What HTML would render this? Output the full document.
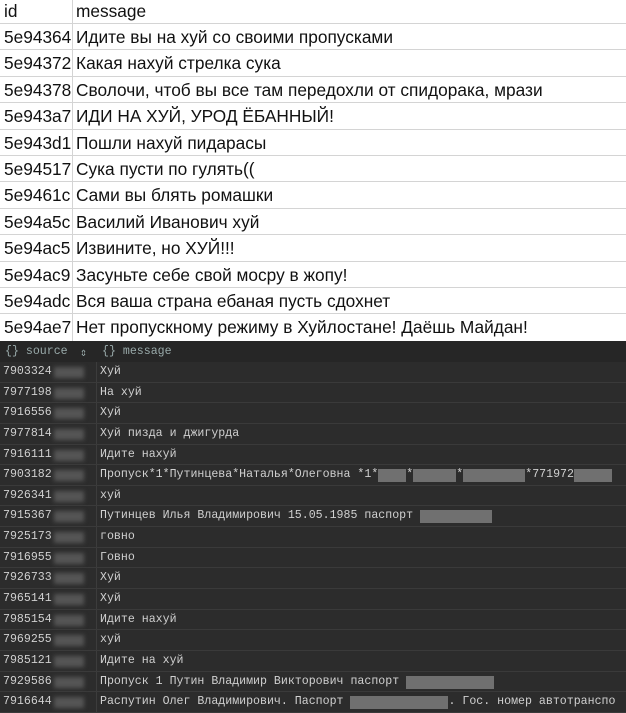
<!DOCTYPE html>
<html><head><meta charset="utf-8"><style>
*{margin:0;padding:0;box-sizing:border-box}
body{width:626px;height:713px;overflow:hidden;background:#fff;position:relative}
.t{position:absolute;left:0;top:0;width:626px;font-family:"Liberation Sans","DejaVu Sans",sans-serif;font-size:17.3px;color:#111}
.t .r{height:26.4px;border-bottom:1px solid #d4d4d4;position:relative;white-space:nowrap;overflow:hidden}
.t .r.h{height:24px}
.t .a{position:absolute;left:4px;top:3px;width:68px;overflow:hidden}
.t .b{position:absolute;left:76px;top:3px}
.t .r.h .a,.t .r.h .b{top:1px}
.t .v{position:absolute;left:72px;top:0;width:1px;height:341px;background:#d4d4d4}
.d{position:absolute;left:0;top:341px;width:626px;height:372px;background:#2c2c2c;font-family:"Liberation Mono","DejaVu Sans Mono",monospace;font-size:11.6px;color:#d0d0d0}
.d .hd{height:21px;background:#262626;color:#9aa;position:relative}
.d .hd span{position:absolute;top:4px}
.d .r{height:20.65px;border-bottom:1px solid #3a3a3a;position:relative;white-space:nowrap}
.d .a{position:absolute;left:3px;top:3px;line-height:14px}
.d .bl{position:absolute;left:54px;top:5px;width:30px;height:11px;background:#555;filter:blur(2px)}
.d .b{position:absolute;left:100px;top:3px;line-height:14px}
.d .vv{position:absolute;left:96px;top:0;width:1px;height:372px;background:#3c3c3c}
.g{display:inline-block;background:#707070;height:13px;vertical-align:top;margin-top:1px}
</style></head><body>
<div class="t">
<div class="r h"><span class="a">id</span><span class="b">message</span></div>
<div class="r"><span class="a">5e94364</span><span class="b">Идите вы на хуй со своими пропусками</span></div>
<div class="r"><span class="a">5e94372</span><span class="b">Какая нахуй стрелка сука</span></div>
<div class="r"><span class="a">5e94378</span><span class="b">Сволочи, чтоб вы все там передохли от спидорака, мрази</span></div>
<div class="r"><span class="a">5e943a7</span><span class="b">ИДИ НА ХУЙ, УРОД ЁБАННЫЙ!</span></div>
<div class="r"><span class="a">5e943d1</span><span class="b">Пошли нахуй пидарасы</span></div>
<div class="r"><span class="a">5e94517</span><span class="b">Сука пусти по гулять((</span></div>
<div class="r"><span class="a">5e9461c</span><span class="b">Сами вы блять ромашки</span></div>
<div class="r"><span class="a">5e94a5c</span><span class="b">Василий Иванович хуй</span></div>
<div class="r"><span class="a">5e94ac5</span><span class="b">Извините, но ХУЙ!!!</span></div>
<div class="r"><span class="a">5e94ac9</span><span class="b">Засуньте себе свой мосру в жопу!</span></div>
<div class="r"><span class="a">5e94adc</span><span class="b">Вся ваша страна ебаная пусть сдохнет</span></div>
<div class="r" style="border:none"><span class="a">5e94ae7</span><span class="b">Нет пропускному режиму в Хуйлостане! Даёшь Майдан!</span></div>
<div class="v"></div>
</div>
<div class="d">
<div class="vv"></div>
<div class="hd"><span style="left:5px">{} source</span><span style="left:80px">⇕</span><span style="left:102px">{} message</span></div>
<div class="r"><span class="a">7903324</span><i class="bl"></i><span class="b">Хуй</span></div>
<div class="r"><span class="a">7977198</span><i class="bl"></i><span class="b">На хуй</span></div>
<div class="r"><span class="a">7916556</span><i class="bl"></i><span class="b">Хуй</span></div>
<div class="r"><span class="a">7977814</span><i class="bl"></i><span class="b">Хуй пизда и джигурда</span></div>
<div class="r"><span class="a">7916111</span><i class="bl"></i><span class="b">Идите нахуй</span></div>
<div class="r"><span class="a">7903182</span><i class="bl"></i><span class="b">Пропуск*1*Путинцева*Наталья*Олеговна *1*<i class="g" style="width:28px"></i>*<i class="g" style="width:43px"></i>*<i class="g" style="width:62px"></i>*771972<i class="g" style="width:38px"></i></span></div>
<div class="r"><span class="a">7926341</span><i class="bl"></i><span class="b">хуй</span></div>
<div class="r"><span class="a">7915367</span><i class="bl"></i><span class="b">Путинцев Илья Владимирович 15.05.1985 паспорт <i class="g" style="width:72px"></i></span></div>
<div class="r"><span class="a">7925173</span><i class="bl"></i><span class="b">говно</span></div>
<div class="r"><span class="a">7916955</span><i class="bl"></i><span class="b">Говно</span></div>
<div class="r"><span class="a">7926733</span><i class="bl"></i><span class="b">Хуй</span></div>
<div class="r"><span class="a">7965141</span><i class="bl"></i><span class="b">Хуй</span></div>
<div class="r"><span class="a">7985154</span><i class="bl"></i><span class="b">Идите нахуй</span></div>
<div class="r"><span class="a">7969255</span><i class="bl"></i><span class="b">хуй</span></div>
<div class="r"><span class="a">7985121</span><i class="bl"></i><span class="b">Идите на хуй</span></div>
<div class="r"><span class="a">7929586</span><i class="bl"></i><span class="b">Пропуск 1 Путин Владимир Викторович паспорт <i class="g" style="width:88px"></i></span></div>
<div class="r"><span class="a">7916644</span><i class="bl"></i><span class="b">Распутин Олег Владимирович. Паспорт <i class="g" style="width:98px"></i>. Гос. номер автотранспо</span></div>
</div>
</body></html>
